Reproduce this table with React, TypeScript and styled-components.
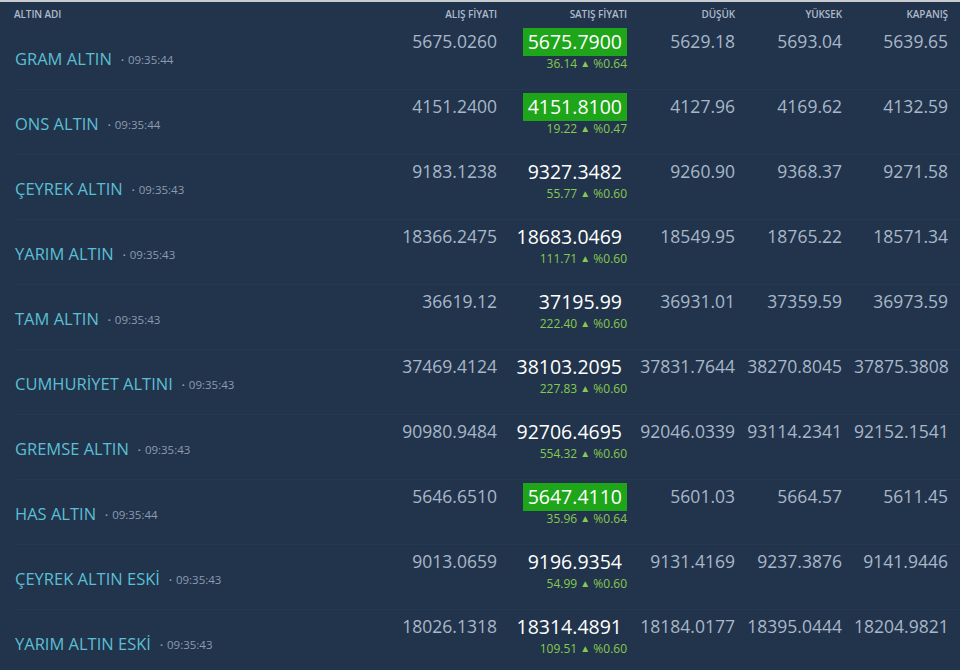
import React from 'react'
import styled, { createGlobalStyle } from 'styled-components'

type Row = {
  name: string
  time: string
  buy: string
  sell: string
  change: string
  pct: string
  low: string
  high: string
  close: string
  flash?: boolean
}

const rows: Row[] = [
  { name: 'GRAM ALTIN', time: '09:35:44', buy: '5675.0260', sell: '5675.7900', change: '36.14', pct: '%0.64', low: '5629.18', high: '5693.04', close: '5639.65', flash: true },
  { name: 'ONS ALTIN', time: '09:35:44', buy: '4151.2400', sell: '4151.8100', change: '19.22', pct: '%0.47', low: '4127.96', high: '4169.62', close: '4132.59', flash: true },
  { name: 'ÇEYREK ALTIN', time: '09:35:43', buy: '9183.1238', sell: '9327.3482', change: '55.77', pct: '%0.60', low: '9260.90', high: '9368.37', close: '9271.58' },
  { name: 'YARIM ALTIN', time: '09:35:43', buy: '18366.2475', sell: '18683.0469', change: '111.71', pct: '%0.60', low: '18549.95', high: '18765.22', close: '18571.34' },
  { name: 'TAM ALTIN', time: '09:35:43', buy: '36619.12', sell: '37195.99', change: '222.40', pct: '%0.60', low: '36931.01', high: '37359.59', close: '36973.59' },
  { name: 'CUMHURİYET ALTINI', time: '09:35:43', buy: '37469.4124', sell: '38103.2095', change: '227.83', pct: '%0.60', low: '37831.7644', high: '38270.8045', close: '37875.3808' },
  { name: 'GREMSE ALTIN', time: '09:35:43', buy: '90980.9484', sell: '92706.4695', change: '554.32', pct: '%0.60', low: '92046.0339', high: '93114.2341', close: '92152.1541' },
  { name: 'HAS ALTIN', time: '09:35:44', buy: '5646.6510', sell: '5647.4110', change: '35.96', pct: '%0.64', low: '5601.03', high: '5664.57', close: '5611.45', flash: true },
  { name: 'ÇEYREK ALTIN ESKİ', time: '09:35:43', buy: '9013.0659', sell: '9196.9354', change: '54.99', pct: '%0.60', low: '9131.4169', high: '9237.3876', close: '9141.9446' },
  { name: 'YARIM ALTIN ESKİ', time: '09:35:43', buy: '18026.1318', sell: '18314.4891', change: '109.51', pct: '%0.60', low: '18184.0177', high: '18395.0444', close: '18204.9821' },
]

const GlobalStyle = createGlobalStyle`
  body {
    margin: 0;
    background: #22344b;
    font-family: "Open Sans", "Liberation Sans", sans-serif;
  }
`

const App = () => {
  return (
    <>
      <GlobalStyle />
      <Board>
        <Header>
          <HeadCell $left>ALTIN ADI</HeadCell>
          <HeadCell>ALIŞ FİYATI</HeadCell>
          <HeadCell>SATIŞ FİYATI</HeadCell>
          <HeadCell>DÜŞÜK</HeadCell>
          <HeadCell>YÜKSEK</HeadCell>
          <HeadCell>KAPANIŞ</HeadCell>
        </Header>
        {rows.map((r) => (
          <RowLine key={r.name}>
            <NameCell>
              <Name>{r.name}</Name>
              <Time>
                <Dot>•</Dot>
                {r.time}
              </Time>
            </NameCell>
            <Value>{r.buy}</Value>
            <SellCell>
              <Sell $flash={r.flash}>{r.sell}</Sell>
              <Change>
                {r.change} <Arrow>▲</Arrow> {r.pct}
              </Change>
            </SellCell>
            <Value>{r.low}</Value>
            <Value>{r.high}</Value>
            <Value>{r.close}</Value>
          </RowLine>
        ))}
      </Board>
    </>
  )
}

const Board = styled.div`
  width: 960px;
  height: 670px;
  overflow: hidden;
  border-top: 2px solid #c9ccd0;
  box-sizing: border-box;
  background: #22344b;
`

const columns = 'grid-template-columns: 389px 120px 130px 108px 107px 106px;'

const Header = styled.div`
  display: grid;
  ${columns}
  height: 23px;
  align-items: center;
`

const HeadCell = styled.div<{ $left?: boolean }>`
  font-size: 10px;
  font-weight: 600;
  color: #aebacb;
  text-align: ${(p) => (p.$left ? 'left' : 'right')};
  padding: ${(p) => (p.$left ? '0 0 0 14px' : '0 12px 0 0')};
  letter-spacing: -0.1px;
`

const RowLine = styled.div`
  display: grid;
  ${columns}
  height: 65px;
  background: linear-gradient(#25384f, #25384f) 15px 100% / calc(100% - 15px) 1px no-repeat;
`

const NameCell = styled.div`
  display: flex;
  align-items: center;
  padding-left: 15px;
  padding-top: 2px;
  gap: 9px;
`

const Name = styled.span`
  font-size: 16.5px;
  color: #5bbfd3;
`

const Time = styled.span`
  font-size: 11.5px;
  color: #8b9bb0;
  display: flex;
  align-items: center;
  gap: 4px;
  padding-top: 2px;
`

const Dot = styled.span`
  font-size: 8px;
`

const Value = styled.div`
  font-size: 17.5px;
  color: #a8b7c9;
  text-align: right;
  padding: 4px 12px 0 0;
  line-height: 24px;
  white-space: nowrap;
`

const SellCell = styled.div`
  display: flex;
  flex-direction: column;
  align-items: flex-end;
  padding: 3px 12px 0 0;
`

const Sell = styled.span<{ $flash?: boolean }>`
  font-size: 19.5px;
  line-height: 28px;
  color: #ffffff;
  padding: 0 5px;
  background: ${(p) => (p.$flash ? '#1ea51a' : 'transparent')};
  white-space: nowrap;
`

const Change = styled.span`
  font-size: 12px;
  line-height: 14px;
  color: #86c951;
  white-space: nowrap;
`

const Arrow = styled.span`
  font-size: 10px;
  vertical-align: 1px;
`

export default App
